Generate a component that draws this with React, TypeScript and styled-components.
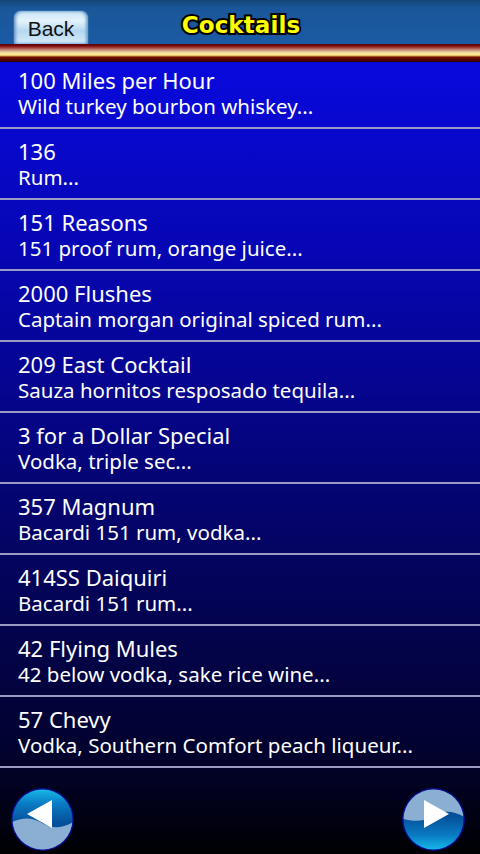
import React from 'react';
import styled, { createGlobalStyle } from 'styled-components';

const GlobalStyle = createGlobalStyle`
  html, body {
    margin: 0;
    padding: 0;
    background: #000;
  }
  #root {
    width: 480px;
    height: 854px;
  }
`;

interface Cocktail {
  name: string;
  ingredients: string;
}

const cocktails: Cocktail[] = [
  { name: '100 Miles per Hour', ingredients: 'Wild turkey bourbon whiskey...' },
  { name: '136', ingredients: 'Rum...' },
  { name: '151 Reasons', ingredients: '151 proof rum, orange juice...' },
  { name: '2000 Flushes', ingredients: 'Captain morgan original spiced rum...' },
  { name: '209 East Cocktail', ingredients: 'Sauza hornitos resposado tequila...' },
  { name: '3 for a Dollar Special', ingredients: 'Vodka, triple sec...' },
  { name: '357 Magnum', ingredients: 'Bacardi 151 rum, vodka...' },
  { name: '414SS Daiquiri', ingredients: 'Bacardi 151 rum...' },
  { name: '42 Flying Mules', ingredients: '42 below vodka, sake rice wine...' },
  { name: '57 Chevy', ingredients: 'Vodka, Southern Comfort peach liqueur...' },
];

const Screen = styled.div`
  width: 480px;
  height: 854px;
  overflow: hidden;
  display: flex;
  flex-direction: column;
  background: linear-gradient(180deg, #0a0aea 0px, #0606b4 250px, #04046a 520px, #02022c 760px, #000003 854px);
`;

const Header = styled.div`
  position: relative;
  z-index: 1;
  display: flex;
  flex-direction: column;
  flex: none;
`;

const TitleBar = styled.div`
  height: 44px;
  display: grid;
  grid-template-columns: 1fr auto 1fr;
  align-items: end;
  background: linear-gradient(180deg, #154678 0px, #1a5699 8px, #1b5ba4 44px);
`;

const BackButton = styled.button`
  justify-self: start;
  margin-left: 13px;
  width: 76px;
  height: 34px;
  border: 1px solid #2d6aa8;
  border-bottom: none;
  border-radius: 8px 8px 2px 2px;
  background: linear-gradient(180deg, #c9e4f6 0%, #e4f3fc 30%, #b4d8f0 60%, #d6ecfa 100%);
  box-shadow: inset 2px 0 3px #6d9dca, inset -2px 0 3px #6d9dca;
  font-family: 'Liberation Sans', Arial, sans-serif;
  font-size: 21px;
  color: #111;
  padding: 2px 0 0;
  cursor: pointer;
`;

const Title = styled.h1`
  margin: 0;
  align-self: center;
  font-family: 'DejaVu Sans', Verdana, sans-serif;
  font-weight: bold;
  font-size: 23px;
  letter-spacing: 0.1px;
  color: #ffff00;
  -webkit-text-stroke: 4px #000;
  paint-order: stroke fill;
  padding: 6px 0 0 2px;
`;

const Stripe = styled.div`
  height: 18px;
  background: linear-gradient(
    180deg,
    #5a0508 0px,
    #7a0c0c 2px,
    #9a2a24 3px,
    #b86a66 5px,
    #d8b08c 7px,
    #f6e6a6 9px,
    #ffe890 11px,
    #c89a40 12px,
    #7a1208 13px,
    #5c0404 15px,
    #2a0202 18px
  );
`;

const List = styled.ul`
  list-style: none;
  margin: -4px 0 0;
  padding: 0;
  flex: none;
`;

const Row = styled.li`
  height: 71px;
  box-sizing: border-box;
  padding: 9px 18px 0;
  border-bottom: 2px solid #9a9ac4;
  font-family: 'Noto Sans', 'Open Sans', sans-serif;
  color: #fff;
`;

const Name = styled.div`
  font-size: 22px;
  line-height: 26px;
`;

const Ingredients = styled.div`
  font-size: 20.5px;
  line-height: 26px;
`;

const Footer = styled.div`
  flex: 1;
  display: flex;
  justify-content: space-between;
  align-items: flex-end;
  padding: 0 14px 2px 10px;
`;

const NavButton = styled.button`
  width: 65px;
  height: 65px;
  padding: 0;
  border: none;
  background: none;
  cursor: pointer;
  display: block;
`;

const Arrow: React.FC<{ dir: 'left' | 'right' }> = ({ dir }) => {
  const id = `nav-${dir}`;
  const flip = dir === 'left';
  return (
    <svg width="65" height="65" viewBox="0 0 65 65">
      <defs>
        <linearGradient id={`${id}-dark`} x1="0" y1={flip ? '0' : '1'} x2="0" y2={flip ? '1' : '0'}>
          <stop offset="0" stopColor="#18c4ee" />
          <stop offset="0.25" stopColor="#0a7cc4" />
          <stop offset="0.55" stopColor="#04509a" />
        </linearGradient>
        <clipPath id={`${id}-clip`}>
          <circle cx="32.5" cy="32.5" r="30" />
        </clipPath>
      </defs>
      <circle cx="32.5" cy="32.5" r="31.5" fill="#0a0a8a" />
      <g clipPath={`url(#${id}-clip)`}>
        <rect x="0" y="0" width="65" height="65" fill={`url(#${id}-dark)`} />
        {flip ? (
          <path d="M0 36 C 12 30, 22 30, 32 36 S 52 42, 65 34 L65 65 L0 65 Z" fill="#8aafd2" />
        ) : (
          <path d="M0 31 C 12 35, 22 35, 32 29 S 52 23, 65 31 L65 0 L0 0 Z" fill="#8aafd2" />
        )}
      </g>
      {flip ? (
        <polygon points="17,27 42,13 42,41" fill="#fff" />
      ) : (
        <polygon points="48,27 23,13 23,41" fill="#fff" />
      )}
    </svg>
  );
};

const App: React.FC = () => {
  return (
    <>
      <GlobalStyle />
      <Screen>
        <Header>
          <TitleBar>
            <BackButton>Back</BackButton>
            <Title>Cocktails</Title>
            <span />
          </TitleBar>
          <Stripe />
        </Header>
        <List>
          {cocktails.map((c) => (
            <Row key={c.name}>
              <Name>{c.name}</Name>
              <Ingredients>{c.ingredients}</Ingredients>
            </Row>
          ))}
        </List>
        <Footer>
          <NavButton aria-label="Previous">
            <Arrow dir="left" />
          </NavButton>
          <NavButton aria-label="Next">
            <Arrow dir="right" />
          </NavButton>
        </Footer>
      </Screen>
    </>
  );
};

export default App;
